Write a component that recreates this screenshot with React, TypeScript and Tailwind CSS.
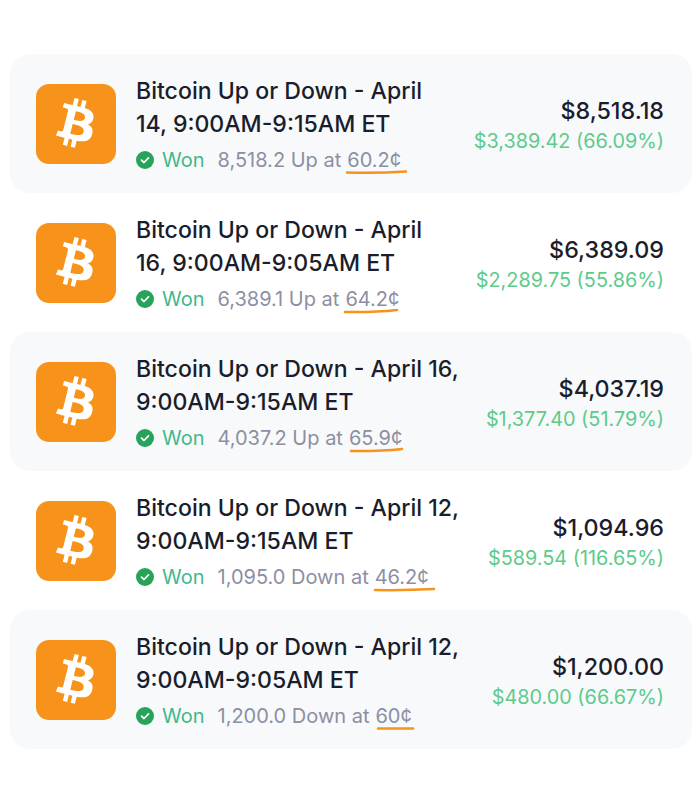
const rows = [
  { title: "Bitcoin Up or Down - April 14, 9:00AM-9:15AM ET", shares: "8,518.2 Up at", price: "60.2¢", value: "$8,518.18", gain: "$3,389.42 (66.09%)", shaded: true, curve: "M0 2.5 Q30 3.5 59 1.5" },
  { title: "Bitcoin Up or Down - April 16, 9:00AM-9:05AM ET", shares: "6,389.1 Up at", price: "64.2¢", value: "$6,389.09", gain: "$2,289.75 (55.86%)", shaded: false, curve: "M0 3 Q30 3.5 52 1" },
  { title: "Bitcoin Up or Down - April 16, 9:00AM-9:15AM ET", shares: "4,037.2 Up at", price: "65.9¢", value: "$4,037.19", gain: "$1,377.40 (51.79%)", shaded: true, curve: "M2 3 Q30 3.5 53 1" },
  { title: "Bitcoin Up or Down - April 12, 9:00AM-9:15AM ET", shares: "1,095.0 Down at", price: "46.2¢", value: "$1,094.96", gain: "$589.54 (116.65%)", shaded: false, curve: "M0 3 Q30 3.5 59 2" },
  { title: "Bitcoin Up or Down - April 12, 9:00AM-9:05AM ET", shares: "1,200.0 Down at", price: "60¢", value: "$1,200.00", gain: "$480.00 (66.67%)", shaded: true, curve: "M3 2.5 L38 2.5" },
];

function BitcoinIcon() {
  return (
    <div className="w-20 h-20 shrink-0 rounded-[13px] bg-[#f7931a]">
      <svg width="80" height="80" viewBox="0 0 32 32">
        <path
          transform="translate(-0.2 -0.4)"
          fill="#ffffff"
          d="M23.189 14.02c.314-2.096-1.283-3.223-3.465-3.975l.708-2.84-1.728-.43-.69 2.765c-.454-.114-.92-.22-1.385-.326l.695-2.783L15.596 6l-.708 2.839c-.376-.086-.746-.17-1.104-.26l.002-.009-2.384-.595-.46 1.846s1.283.294 1.256.312c.7.175.826.638.805 1.006l-.806 3.235c.048.012.11.03.18.057l-.183-.045-1.13 4.532c-.086.212-.303.531-.793.41.018.025-1.256-.313-1.256-.313l-.858 1.978 2.25.561c.418.105.828.215 1.231.318l-.715 2.872 1.727.43.708-2.84c.472.127.93.245 1.378.357l-.706 2.828 1.728.43.715-2.866c2.948.558 5.164.333 6.097-2.333.752-2.146-.037-3.385-1.588-4.192 1.13-.26 1.98-1.003 2.207-2.538zm-3.95 5.538c-.533 2.147-4.148.986-5.32.695l.95-3.805c1.172.293 4.929.872 4.37 3.11zm.535-5.569c-.487 1.953-3.495.96-4.47.717l.86-3.45c.975.243 4.118.696 3.61 2.733z"
        />
      </svg>
    </div>
  );
}

function WonIcon() {
  return (
    <svg width="18" height="18" viewBox="0 0 18 18" className="shrink-0">
      <circle cx="9" cy="9" r="9" fill="#27a35a" />
      <path d="M5.5 9.2 L8 11.5 L12.5 6.8" fill="none" stroke="#ffffff" strokeWidth="1.7" strokeLinecap="round" strokeLinejoin="round" />
    </svg>
  );
}

export default function App() {
  return (
    <div className="w-[700px] h-[800px] bg-white pt-[54px] pl-[10px] pr-2 font-['Inter',sans-serif]">
      {rows.map((r) => (
        <div
          key={r.price + r.value}
          className={`h-[139px] flex items-center pl-[26px] pr-7 gap-5 rounded-[20px] ${r.shaded ? "bg-[#f8f9fb]" : "bg-white"}`}
        >
          <BitcoinIcon />
          <div className="flex-1 min-w-0 flex items-center gap-6">
            <div className="flex-1 min-w-0 pt-[1px]">
              <div className="text-[23.1px] leading-[33px] font-medium text-[#1a1d2b]">{r.title}</div>
              <div className="flex items-center mt-[5px] h-7 text-[20px] text-[#8c8fa3]">
                <WonIcon />
                <span className="ml-2 text-[#41b88a]">Won</span>
                <span className="ml-[13px]">{r.shares}</span>
                <span className="relative ml-[6px]">
                  {r.price}
                  <svg width="62" height="5" viewBox="0 0 62 5" className="absolute left-0 top-[25px] overflow-visible">
                    <path d={r.curve} fill="none" stroke="#f7931a" strokeWidth="2.5" strokeLinecap="round" />
                  </svg>
                </span>
              </div>
            </div>
            <div className="shrink-0 text-right">
              <div className="text-[23.3px] leading-[33px] font-medium text-[#1a1d2b] mt-[2px]">{r.value}</div>
              <div className="text-[19.85px] leading-[29px] text-[#5dcb8b]">{r.gain}</div>
            </div>
          </div>
        </div>
      ))}
    </div>
  );
}
